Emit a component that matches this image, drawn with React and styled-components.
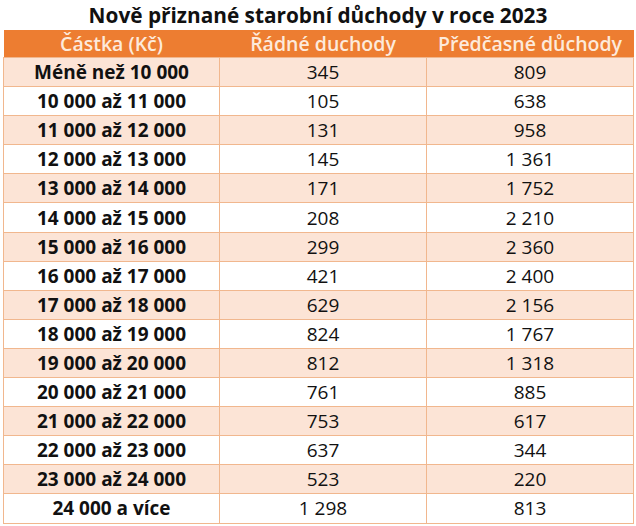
import React from "react";
import styled, { createGlobalStyle } from "styled-components";

const Global = createGlobalStyle`
  html, body { margin: 0; padding: 0; background: #ffffff; }
  body { font-family: "Open Sans", "Liberation Sans", sans-serif; }
`;

const Page = styled.div`
  width: 636px;
  padding: 0 3px;
  box-sizing: border-box;
`;

const Title = styled.h1`
  margin: 0;
  height: 30px;
  line-height: 30px;
  text-align: center;
  font-size: 20.8px;
  font-weight: 700;
  color: #111111;
  white-space: nowrap;
`;

const Table = styled.table`
  width: 630px;
  border-collapse: collapse;
  table-layout: fixed;
`;

const HeadCell = styled.th`
  height: 27px;
  padding: 0;
  background: #ed7d31;
  color: #fdeadb;
  font-size: 19.5px;
  font-weight: 600;
  text-align: center;
  vertical-align: middle;
  line-height: 27px;
  white-space: nowrap;
`;

const Row = styled.tr`
  background: ${(p) => (p.$striped ? "#fce4d6" : "#ffffff")};
`;

const Cell = styled.td`
  height: 28.1px;
  padding: 0;
  border: 1px solid #f1b78e;
  text-align: center;
  vertical-align: middle;
  font-size: 19px;
  font-weight: ${(p) => (p.$bold ? 700 : 400)};
  color: #111111;
  line-height: 20px;
  white-space: nowrap;
`;

const rows = [
  ["Méně než 10 000", "345", "809"],
  ["10 000 až 11 000", "105", "638"],
  ["11 000 až 12 000", "131", "958"],
  ["12 000 až 13 000", "145", "1 361"],
  ["13 000 až 14 000", "171", "1 752"],
  ["14 000 až 15 000", "208", "2 210"],
  ["15 000 až 16 000", "299", "2 360"],
  ["16 000 až 17 000", "421", "2 400"],
  ["17 000 až 18 000", "629", "2 156"],
  ["18 000 až 19 000", "824", "1 767"],
  ["19 000 až 20 000", "812", "1 318"],
  ["20 000 až 21 000", "761", "885"],
  ["21 000 až 22 000", "753", "617"],
  ["22 000 až 23 000", "637", "344"],
  ["23 000 až 24 000", "523", "220"],
  ["24 000 a více", "1 298", "813"],
];

export default function App() {
  return (
    <>
      <Global />
      <Page>
        <Title>Nově přiznané starobní důchody v roce 2023</Title>
        <Table>
          <colgroup>
            <col style={{ width: "216px" }} />
            <col style={{ width: "207px" }} />
            <col style={{ width: "207px" }} />
          </colgroup>
          <thead>
            <tr>
              <HeadCell>Částka (Kč)</HeadCell>
              <HeadCell>Řádné duchody</HeadCell>
              <HeadCell>Předčasné důchody</HeadCell>
            </tr>
          </thead>
          <tbody>
            {rows.map((r, i) => (
              <Row key={r[0]} $striped={i % 2 === 0}>
                <Cell $bold>{r[0]}</Cell>
                <Cell>{r[1]}</Cell>
                <Cell>{r[2]}</Cell>
              </Row>
            ))}
          </tbody>
        </Table>
      </Page>
    </>
  );
}
